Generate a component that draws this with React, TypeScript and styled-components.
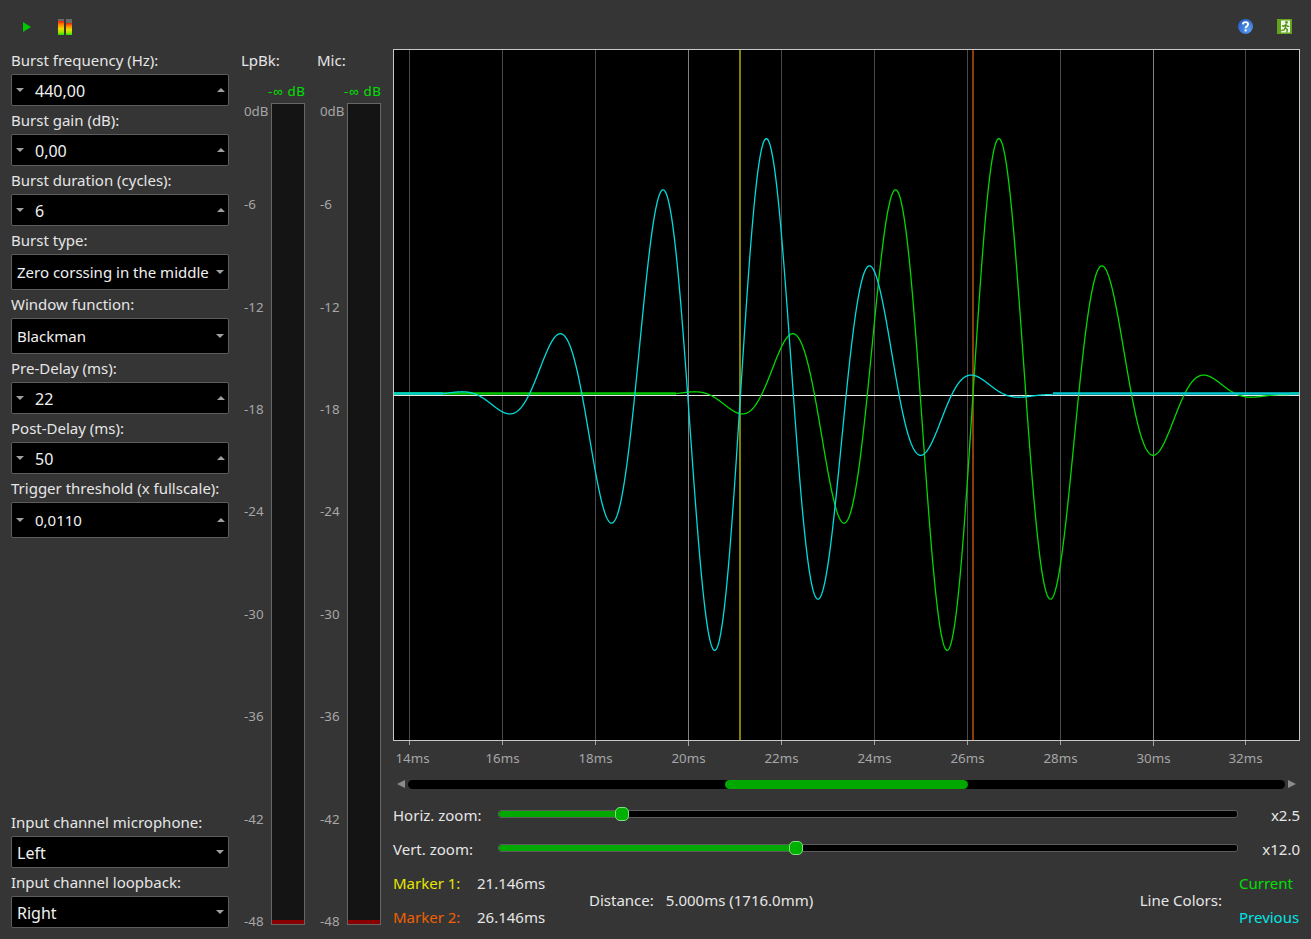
import React from 'react';
import styled, { createGlobalStyle } from 'styled-components';

const GlobalStyle = createGlobalStyle`
  html, body {
    margin: 0;
    padding: 0;
    background: #353535;
  }
  body {
    font-family: "Noto Sans", sans-serif;
    font-size: 15px;
    color: #e6e6e6;
  }
`;

const Window = styled.div`
  width: 1311px;
  height: 939px;
  overflow: hidden;
  display: flex;
  flex-direction: column;
  background: #353535;
`;

const Toolbar = styled.div`
  height: 49px;
  flex: none;
  display: flex;
  align-items: center;
  padding: 5px 19px 0 19px;
  box-sizing: border-box;
`;

const ToolButton = styled.div<{ $gap?: number }>`
  width: 16px;
  height: 16px;
  margin-right: ${props => props.$gap ?? 0}px;
  display: flex;
`;

const Spacer = styled.div`
  flex: 1;
`;

const Main = styled.div`
  flex: 1;
  display: flex;
  padding-left: 11px;
  min-height: 0;
`;

const SidePanel = styled.div`
  width: 218px;
  height: 882px;
  flex: none;
  display: flex;
  flex-direction: column;
  justify-content: space-between;
  margin-right: 12px;
`;

const FieldGroup = styled.div`
  display: flex;
  flex-direction: column;
`;

const FieldLabel = styled.div`
  height: 25px;
  line-height: 22px;
  white-space: nowrap;
`;

const Field = styled.div<{ $tall?: boolean }>`
  height: ${props => (props.$tall ? 36 : 32)}px;
  box-sizing: border-box;
  border: 1px solid #5c5c5c;
  border-radius: 2px;
  background: #000;
  color: #f0f0f0;
  display: flex;
  align-items: center;
  margin-bottom: 3px;
  padding: 0 3px 0 4px;
`;

const SpinValue = styled.div<{ $small?: boolean }>`
  flex: 1;
  padding-left: 11px;
  font-size: ${props => (props.$small ? 15 : 16)}px;
  margin-top: ${props => (props.$small ? 0 : 2)}px;
`;

const ComboValue = styled.div<{ $large?: boolean }>`
  flex: 1;
  padding-left: 1px;
  font-size: ${props => (props.$large ? 16 : 15)}px;
  margin-top: ${props => (props.$large ? 2 : 0)}px;
  white-space: nowrap;
`;

const Caret = styled.div<{ $up?: boolean; $inset?: boolean }>`
  width: 0;
  height: 0;
  margin-right: ${props => (props.$inset ? 1 : 0)}px;
  border-left: 4px solid transparent;
  border-right: 4px solid transparent;
  border-${props => (props.$up ? 'bottom' : 'top')}: 4px solid #a0a0a0;
`;

const Meter = styled.div`
  width: 64px;
  height: 879px;
  flex: none;
  margin-right: 12px;
  display: flex;
  flex-direction: column;
`;

const MeterTitle = styled.div`
  height: 24px;
  line-height: 22px;
`;

const MeterReading = styled.div`
  height: 30px;
  padding-top: 6px;
  box-sizing: border-box;
  line-height: 24px;
  text-align: right;
  font-size: 13.33px;
  color: #00e000;
  letter-spacing: 0.7px;
  margin-right: -0.7px;
`;

const MeterBody = styled.div`
  display: flex;
  height: 822px;
`;

const DbScale = styled.div`
  width: 30px;
  flex: none;
  display: flex;
  flex-direction: column;
  padding: 0 0 0 3px;
  box-sizing: border-box;
`;

const DbTick = styled.div<{ $first?: boolean }>`
  height: ${props => (props.$first ? 93.3 : 102.4)}px;
  font-size: 13.33px;
  line-height: 16px;
  color: #a6a6a6;
  flex: none;
`;

const MeterBar = styled.div`
  width: 34px;
  height: 822px;
  box-sizing: border-box;
  border: 1px solid #666;
  background: #141414;
  display: flex;
  flex-direction: column;
  justify-content: flex-end;
`;

const MeterLevel = styled.div`
  height: 4px;
  background: #8a0000;
`;

const ChartColumn = styled.div`
  width: 907px;
  flex: none;
  display: flex;
  flex-direction: column;
`;

const Plot = styled.svg`
  display: block;
  width: 907px;
  height: 692px;
  flex: none;
`;

const TimeAxis = styled.div`
  display: flex;
  height: 30px;
  margin-left: -30px;
  flex: none;
`;

const TimeTick = styled.div<{ $last?: boolean }>`
  width: 93px;
  flex: none;
  display: flex;
  flex-direction: column;
  align-items: center;
  font-size: 13.33px;
  color: #a6a6a6;
  margin-left: ${props => (props.$last ? -1 : 0)}px;
`;

const TickMark = styled.div<{ $major?: boolean }>`
  width: 1px;
  height: ${props => (props.$major ? 5 : 4)}px;
  margin-bottom: ${props => (props.$major ? -1 : 0)}px;
  background: #a6a6a6;
`;

const TickText = styled.div<{ $clamped?: boolean }>`
  line-height: 18px;
  margin-top: 4px;
  margin-left: ${props => (props.$clamped ? 6 : 0)}px;
`;

const ScrollRow = styled.div`
  height: 10px;
  margin-top: 8px;
  display: flex;
  align-items: center;
  gap: 3px;
  padding: 0 4px;
  flex: none;
`;

const ScrollArrow = styled.div<{ $right?: boolean }>`
  width: 0;
  height: 0;
  border-top: 4px solid transparent;
  border-bottom: 4px solid transparent;
  border-${props => (props.$right ? 'left' : 'right')}: 8px solid #8c8c8c;
`;

const ScrollTrack = styled.div`
  flex: 1;
  height: 9px;
  border-radius: 5px;
  background: #000;
  display: flex;
`;

const ScrollThumb = styled.div`
  height: 9px;
  border-radius: 5px;
  background: #00a800;
`;

const SliderStack = styled.div`
  margin-top: 9px;
  flex: none;
`;

const SliderRow = styled.div`
  height: 34px;
  display: flex;
  align-items: center;
`;

const SliderLabel = styled.div`
  width: 105px;
  flex: none;
`;

const SliderTrack = styled.div`
  width: 740px;
  height: 8px;
  box-sizing: border-box;
  flex: none;
  background: #000;
  border: 1px solid #5c5c5c;
  border-radius: 3px;
  display: flex;
  align-items: center;
  margin-top: -2px;
`;

const SliderFill = styled.div`
  height: 6px;
  background: #00a800;
  border-radius: 2px 0 0 2px;
  display: flex;
  justify-content: flex-end;
  align-items: center;
  flex: none;
`;

const SliderThumb = styled.div`
  width: 14px;
  height: 14px;
  box-sizing: border-box;
  flex: none;
  margin-right: -7px;
  background: #00b000;
  border: 1px solid #7fe07f;
  border-radius: 5px;
`;

const SliderValue = styled.div`
  flex: 1;
  text-align: right;
`;

const Readouts = styled.div`
  display: flex;
  align-items: center;
  height: 68px;
  flex: none;
`;

const MarkerGrid = styled.div`
  width: 196px;
  flex: none;
  display: grid;
  grid-template-columns: 84px 1fr;
  row-gap: 14px;
  line-height: 20px;
`;

const Colored = styled.div<{ $color: string }>`
  color: ${props => props.$color};
`;

const DistanceBlock = styled.div`
  display: flex;
  gap: 12px;
  flex: none;
`;

const LineColorsLabel = styled.div`
  margin-left: auto;
  margin-right: 17px;
`;

const LineColors = styled.div`
  width: 61px;
  flex: none;
  display: flex;
  flex-direction: column;
  row-gap: 14px;
  line-height: 20px;
`;

const PlayIcon = () => (
  <svg width="16" height="16" viewBox="0 0 16 16">
    <path d="M4 3 L12 8 L4 13 Z" fill="#00c800" />
  </svg>
);

const LevelsIcon = () => (
  <svg width="16" height="16" viewBox="0 0 16 16">
    <defs>
      <linearGradient id="lvl" x1="0" y1="0" x2="0" y2="1">
        <stop offset="0" stopColor="#e02000" />
        <stop offset="0.25" stopColor="#ff8000" />
        <stop offset="0.55" stopColor="#e8e000" />
        <stop offset="0.8" stopColor="#a0e000" />
        <stop offset="1" stopColor="#20e000" />
      </linearGradient>
    </defs>
    <rect x="0" y="0" width="6" height="3" fill="#6a6a6a" />
    <rect x="8" y="0" width="6" height="4" fill="#6a6a6a" />
    <rect x="0" y="2" width="6" height="14" fill="url(#lvl)" />
    <rect x="8" y="4" width="6" height="12" fill="url(#lvl)" />
  </svg>
);

const HelpIcon = () => (
  <svg width="16" height="16" viewBox="0 0 16 16">
    <defs>
      <radialGradient id="hlp" cx="0.7" cy="0.7" r="0.8">
        <stop offset="0" stopColor="#5a9cf0" />
        <stop offset="1" stopColor="#2860c8" />
      </radialGradient>
    </defs>
    <circle cx="8.5" cy="7.5" r="7.5" fill="url(#hlp)" />
    <path d="M5.9 5.4 C6 3.9 7.1 3.1 8.5 3.1 C10 3.1 11.1 4 11.1 5.3 C11.1 7.2 8.6 7.2 8.6 9.3" fill="none" stroke="#fff" strokeWidth="1.9" />
    <rect x="7.6" y="10.4" width="2" height="2" fill="#fff" />
  </svg>
);

const ExitIcon = () => (
  <svg width="16" height="16" viewBox="0 0 16 16">
    <rect x="1" y="0" width="15" height="15" fill="#62a51c" />
    <rect x="5" y="1.5" width="9" height="12" fill="#f0f5e8" />
    <circle cx="10.5" cy="3.4" r="1.3" fill="#4d9010" />
    <path d="M9.8 5.5 L7.6 7.2 L6 6.8 M9.8 5.5 L9.3 8.8 L11.3 10.6 L10.8 13.5 M9.3 8.8 L8 11 L5.2 11.6 M9.8 5.5 L11.6 7.4 L13.2 7.4" fill="none" stroke="#4d9010" strokeWidth="1.4" />
  </svg>
);

// plot coordinates are relative to the frame's top-left corner (393, 49)
const AXIS_Y = 346;
const PX_PER_MS = 46.5;
const BURST_MS = 6 / 0.44;
const PREVIOUS_CENTER = 347.5;
const CURRENT_CENTER = 580;

const burstPath = (centerX: number, from: number, to: number) => {
  const points: string[] = [];
  for (let x = from; x < to; x += 0.5) {
    const u = (x - centerX) / PX_PER_MS;
    let v = 0;
    if (Math.abs(u) <= BURST_MS / 2) {
      const w = 0.42 + 0.5 * Math.cos((2 * Math.PI * u) / BURST_MS) + 0.08 * Math.cos((4 * Math.PI * u) / BURST_MS);
      v = Math.sin(2 * Math.PI * 0.44 * u) * w * 263;
    }
    points.push(`${x},${(AXIS_Y - 0.5 - v).toFixed(2)}`);
  }
  return `M${points.join(' L')}`;
};

// the silent parts of a trace are noisy in the reference, so they read as a thicker band
const flatPath = (from: number, to: number) => `M${from},${AXIS_Y - 1.5} L${to},${AXIS_Y - 1.5}`;

const ticks = ['14ms', '16ms', '18ms', '20ms', '22ms', '24ms', '26ms', '28ms', '30ms', '32ms'];
const dbTicks = ['0dB', '-6', '-12', '-18', '-24', '-30', '-36', '-42', '-48'];

const gridX = (i: number) => (i === 9 ? 852.5 : 16.5 + i * 93);
const isMajor = (i: number) => i === 3 || i === 8;
const gridColor = (i: number) => (isMajor(i) ? '#808080' : '#484848');

const Spin: React.FC<{ label: string; value: string; small?: boolean; tall?: boolean }> = ({ label, value, small, tall }) => (
  <>
    <FieldLabel>{label}</FieldLabel>
    <Field $tall={tall}>
      <Caret />
      <SpinValue $small={small}>{value}</SpinValue>
      <Caret $up />
    </Field>
  </>
);

const Combo: React.FC<{ label: string; value: string; large?: boolean; tall?: boolean }> = ({ label, value, large, tall }) => (
  <>
    <FieldLabel>{label}</FieldLabel>
    <Field $tall={tall}>
      <ComboValue $large={large}>{value}</ComboValue>
      <Caret $inset />
    </Field>
  </>
);

const LevelMeter: React.FC<{ title: string }> = ({ title }) => (
  <Meter>
    <MeterTitle>{title}</MeterTitle>
    <MeterReading>-∞ dB</MeterReading>
    <MeterBody>
      <DbScale>
        {dbTicks.map((t, i) => (
          <DbTick key={t} $first={i === 0}>{t}</DbTick>
        ))}
      </DbScale>
      <MeterBar>
        <MeterLevel />
      </MeterBar>
    </MeterBody>
  </Meter>
);

const Slider: React.FC<{ label: string; fill: number; value: string }> = ({ label, fill, value }) => (
  <SliderRow>
    <SliderLabel>{label}</SliderLabel>
    <SliderTrack>
      <SliderFill style={{ width: fill }}>
        <SliderThumb />
      </SliderFill>
    </SliderTrack>
    <SliderValue>{value}</SliderValue>
  </SliderRow>
);

const App: React.FC = () => (
  <Window>
    <GlobalStyle />
    <Toolbar>
      <ToolButton $gap={23}><PlayIcon /></ToolButton>
      <ToolButton><LevelsIcon /></ToolButton>
      <Spacer />
      <ToolButton $gap={23}><HelpIcon /></ToolButton>
      <ToolButton><ExitIcon /></ToolButton>
    </Toolbar>
    <Main>
      <SidePanel>
        <FieldGroup>
          <Spin label="Burst frequency (Hz):" value="440,00" />
          <Spin label="Burst gain (dB):" value="0,00" />
          <Spin label="Burst duration (cycles):" value="6" />
          <Combo label="Burst type:" value="Zero corssing in the middle" tall />
          <Combo label="Window function:" value="Blackman" tall />
          <Spin label="Pre-Delay (ms):" value="22" />
          <Spin label="Post-Delay (ms):" value="50" />
          <Spin label="Trigger threshold (x fullscale):" value="0,0110" small tall />
        </FieldGroup>
        <FieldGroup>
          <Combo label="Input channel microphone:" value="Left" large />
          <Combo label="Input channel loopback:" value="Right" large />
        </FieldGroup>
      </SidePanel>
      <LevelMeter title="LpBk:" />
      <LevelMeter title="Mic:" />
      <ChartColumn>
        <Plot viewBox="0 0 907 692">
          <rect x="0" y="0" width="907" height="692" fill="#000" />
          {ticks.map((t, i) => (
            <line key={t} x1={gridX(i)} x2={gridX(i)} y1="1" y2="691" stroke={gridColor(i)} strokeWidth="1" />
          ))}
          <rect x="346" y="1" width="2" height="690" fill="#858000" />
          <rect x="579" y="1" width="2" height="690" fill="#8c3c08" />
          <line x1="1" x2="906" y1={AXIS_Y + 0.5} y2={AXIS_Y + 0.5} stroke="#e8e8e8" strokeWidth="1" />
          <path d={flatPath(1, 283)} fill="none" stroke="#00c800" strokeWidth="2.5" />
          <path d={flatPath(897, 906)} fill="none" stroke="#00c800" strokeWidth="2.5" />
          <path d={burstPath(CURRENT_CENTER, 283, 897)} fill="none" stroke="#00d800" strokeWidth="1.3" />
          <path d={flatPath(1, 50)} fill="none" stroke="#00d0d0" strokeWidth="2.5" />
          <path d={flatPath(660, 906)} fill="none" stroke="#00c8d0" strokeWidth="2.5" />
          <path d={burstPath(PREVIOUS_CENTER, 50, 660)} fill="none" stroke="#00dcdc" strokeWidth="1.3" />
          <rect x="0.5" y="0.5" width="906" height="691" fill="none" stroke="#c8c8c8" strokeWidth="1" />
        </Plot>
        <TimeAxis>
          {ticks.map((t, i) => (
            <TimeTick key={t} $last={i === 9}>
              <TickMark $major={isMajor(i)} />
              <TickText $clamped={i === 0}>{t}</TickText>
            </TimeTick>
          ))}
        </TimeAxis>
        <ScrollRow>
          <ScrollArrow />
          <ScrollTrack>
            <ScrollThumb style={{ marginLeft: 317, width: 243 }} />
          </ScrollTrack>
          <ScrollArrow $right />
        </ScrollRow>
        <SliderStack>
          <Slider label="Horiz. zoom:" fill={123} value="x2.5" />
          <Slider label="Vert. zoom:" fill={297} value="x12.0" />
        </SliderStack>
        <Readouts>
          <MarkerGrid>
            <Colored $color="#e6e600">Marker 1:</Colored>
            <div>21.146ms</div>
            <Colored $color="#f06000">Marker 2:</Colored>
            <div>26.146ms</div>
          </MarkerGrid>
          <DistanceBlock>
            <div>Distance:</div>
            <div>5.000ms (1716.0mm)</div>
          </DistanceBlock>
          <LineColorsLabel>Line Colors:</LineColorsLabel>
          <LineColors>
            <Colored $color="#00e000">Current</Colored>
            <Colored $color="#00e5e5">Previous</Colored>
          </LineColors>
        </Readouts>
      </ChartColumn>
    </Main>
  </Window>
);

export default App;
